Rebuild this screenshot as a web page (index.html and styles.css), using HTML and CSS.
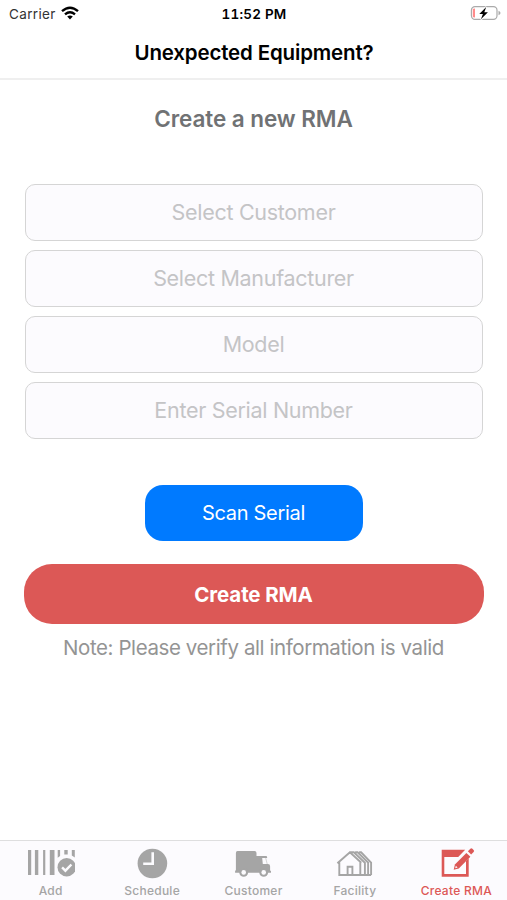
FILE: index.html
```
<!DOCTYPE html>
<html lang="en">
<head>
<meta charset="utf-8">
<title>Create RMA</title>
<link rel="stylesheet" href="styles.css">
</head>
<body>
<header class="header">
  <div class="status">
    <div class="carrier"><span>Carrier</span>
      <svg viewBox="0 0 18 14" width="18" height="14"><g fill="none" stroke="#000" stroke-width="2.4"><path d="M1 5.2Q9-1.8 17 5.2"/><path d="M4 8.3Q9 4.1 14 8.3"/></g><path d="M6.2 10.5Q9 8.3 11.8 10.5L9 13.5Z"/></svg>
    </div>
    <span class="time">11:52 PM</span>
    <svg class="battery" viewBox="0 0 31 16" width="31" height="16"><rect x="1.4" y="1.6" width="25.6" height="12.8" rx="3.6" fill="#fff" stroke="#aaa" stroke-width="1.2"/><path d="M28.5 5.7Q30.5 6.5 30.5 8T28.5 10.3Z" fill="#aaa"/><path d="M2.8 4.5Q2.8 3.5 5 3.5V12.5Q2.8 12.5 2.8 11.5Z" fill="#ff8b8b"/><path d="M16.2 2L9.3 9H12.9L10.9 14.3L17.9 7.2H14.3Z" fill="#000" stroke="#fff" stroke-width="2" paint-order="stroke"/></svg>
  </div>
  <h1 class="title">Unexpected Equipment?</h1>
</header>
<main class="content">
  <h2 class="heading">Create a new RMA</h2>
  <div class="fields">
    <div class="field">Select Customer</div>
    <div class="field">Select Manufacturer</div>
    <div class="field">Model</div>
    <div class="field">Enter Serial Number</div>
  </div>
  <button class="scan">Scan Serial</button>
  <button class="create">Create RMA</button>
  <p class="note">Note: Please verify all information is valid</p>
</main>
<nav class="tabs">
  <a class="tab"><svg viewBox="26.7 846 48 34" width="48" height="34" fill="currentColor"><path d="M27.7 850h3.2v25h-3.2zM34.6 850h3.4v25h-3.4zM42.8 850h2.2v25h-2.2zM49.5 850h4.7v25h-4.7zM57.4 850h2.4v6l-2.4 1.8zM64 850h3.4v4.6H64zM71.5 850h3v7.5l-3-2z"/><circle cx="66.4" cy="867.3" r="9.2"/><path d="M61.8 867.4l3.3 3.3 6-6.2" fill="none" stroke="#fcfbfe" stroke-width="2.4"/></svg><span>Add</span></a>
  <a class="tab"><svg viewBox="128.1 846 48 34" width="48" height="34" fill="currentColor"><circle cx="152.5" cy="863.5" r="14.8"/><path d="M152.8 852.2v11.6h-9.5" fill="none" stroke="#fcfbfe" stroke-width="2.6"/></svg><span>Schedule</span></a>
  <a class="tab"><svg viewBox="229.5 846 48 34" width="48" height="34" fill="currentColor"><path d="M238 851H255q2 0 2 2v3h9.8q.9 0 .9 1.9h-5l.6 6.1h5.1q2.2 0 2.2 2.2v4.3l.9.4v1.9H235.6v-2l.8-.6V853q0-2 1.6-2z"/><path d="M266.2 858l1.5 6" stroke="currentColor" stroke-width=".7" opacity=".6"/><g><circle cx="244.2" cy="872.4" r="4.4"/><circle cx="264.2" cy="872.4" r="4.4"/></g><g fill="#fcfbfe"><circle cx="244.2" cy="872.4" r="2.3"/><circle cx="264.2" cy="872.4" r="2.3"/></g></svg><span>Customer</span></a>
  <a class="tab"><svg viewBox="330.9 846 48 34" width="48" height="34" fill="none" stroke="currentColor" stroke-width="1.9"><path d="M337.3 863.3L349.8 852.3L361.2 862.7M339.2 862V875H371M360.2 862V875M350.5 852.3H353.7L364.8 862.7V875M355 852.3H357.5L368 862.7V875M359 852.3H361L371 862.7V875"/><path d="M347.5 875v-8.3h4.8V875"/></svg><span>Facility</span></a>
  <a class="tab active"><svg viewBox="432.3 846 48 34" width="48" height="34" fill="currentColor"><path d="M442 849.7h23.5l-7 7.2H444.6v17.2h21.7v-13l2.7-2.8v18.4H442z"/><path d="M454 869.8l1.2-5.2 11.5-11.7 4 3.8-11.6 11.8z"/><path d="M455.5 868.2l.6-2.4 1.8 1.7z" fill="#fcfbfe"/><path d="M468.2 851.3l2.5-2.5q1-1 2 0l1.2 1.2q1 1 0 2l-2.5 2.5z"/></svg><span>Create RMA</span></a>
</nav>
</body>
</html>
```
FILE: styles.css
```
* { box-sizing: border-box; }
body {
  margin: 0;
  height: 900px;
  display: flex;
  flex-direction: column;
  background: #fff;
  font-family: Inter, "Liberation Sans", sans-serif;
  overflow: hidden;
}
.header { height: 80px; border-bottom: 2px solid #efefef; }
.status {
  height: 27px;
  padding: 0 6px 0 9px;
  display: grid;
  grid-template-columns: 1fr auto 1fr;
  align-items: center;
  font-size: 13.5px;
}
.carrier { display: flex; align-items: center; gap: 5px; color: #333; letter-spacing: 0.35px; }
.carrier svg { margin-bottom: 2px; }
.time {
  margin-right: 2px;
  font-weight: 600;
  font-size: 13.5px;
  letter-spacing: 0.2px;
  font-variant-numeric: tabular-nums;
}
.battery { justify-self: end; margin-bottom: 1px; }
.title {
  margin: 0;
  height: 51px;
  line-height: 51px;
  text-align: center;
  font-size: 20.5px;
  font-weight: 600;
  letter-spacing: -0.16px;
  text-indent: 1px;
}
.content { flex: 1; display: flex; flex-direction: column; align-items: center; }
.heading {
  margin: 23px 0 0;
  height: 32px;
  line-height: 32px;
  font-size: 22.5px;
  font-weight: 600;
  letter-spacing: -0.08px;
  color: #707274;
}
.fields { margin-top: 49px; width: 458px; display: grid; gap: 9px; }
.field {
  height: 57px;
  padding-bottom: 2px;
  display: flex;
  align-items: center;
  justify-content: center;
  border: 1px solid #d5d5d5;
  border-radius: 10px;
  background: #fcfbfe;
  color: #c4c4c6;
  font-size: 21.5px;
  letter-spacing: -0.3px;
}
.scan, .create { border: 0; padding: 0; color: #fff; font-family: inherit; }
.scan {
  margin-top: 46px;
  width: 218px;
  height: 56px;
  border-radius: 18px;
  background: #007aff;
  font-size: 20px;
  letter-spacing: -0.3px;
}
.create {
  margin-top: 23px;
  width: 460px;
  height: 60px;
  border-radius: 28px;
  background: #dc5856;
  font-size: 20.5px;
  font-weight: 700;
  letter-spacing: -0.1px;
}
.note { margin: 8px 0 0; line-height: 32px; font-size: 20.5px; letter-spacing: -0.41px; color: #949494; white-space: nowrap; }
.tabs {
  height: 60px;
  padding-top: 5px;
  display: grid;
  grid-template-columns: repeat(5, 1fr);
  border-top: 1px solid #dededf;
  background: #fcfbfe;
}
.tab { display: flex; flex-direction: column; align-items: center; color: #a5a5a5; }
.tab span { margin-top: 3px; font-size: 12px; line-height: 16px; font-weight: 500; letter-spacing: 0.27px; }
.tab.active { color: #dc5856; }
```
